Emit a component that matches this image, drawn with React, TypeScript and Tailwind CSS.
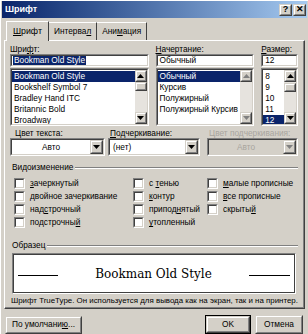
import React from "react";

function Sunken({ className = "", inner = "bg-white", children }: { className?: string; inner?: string; children?: React.ReactNode }) {
  return (
    <div className={`border border-t-[#808080] border-l-[#808080] border-b-white border-r-white ${className}`}>
      <div className={`w-full h-full border border-t-[#404040] border-l-[#404040] border-b-[#d4d0c8] border-r-[#d4d0c8] flex ${inner}`}>
        {children}
      </div>
    </div>
  );
}

function Raised({ className = "", children }: { className?: string; children?: React.ReactNode }) {
  return (
    <div className={`border border-t-[#d4d0c8] border-l-[#d4d0c8] border-r-[#404040] border-b-[#404040] bg-[#d4d0c8] ${className}`}>
      <div className="w-full h-full border border-t-white border-l-white border-r-[#808080] border-b-[#808080] flex items-center justify-center">
        {children}
      </div>
    </div>
  );
}

function Arrow({ up = false, grey = false }: { up?: boolean; grey?: boolean }) {
  const fill = grey ? "#808080" : "#000";
  return (
    <svg width="7" height="4" viewBox="0 0 7 4" className="block">
      {up ? <polygon points="0,4 7,4 3.5,0" fill={fill} /> : <polygon points="0,0 7,0 3.5,4" fill={fill} />}
    </svg>
  );
}

function ScrollBar({ thumb, disabled = false }: { thumb?: number; disabled?: boolean }) {
  return (
    <div className="w-[12px] h-full flex flex-col bg-[#e6e3de] shrink-0">
      <Raised className="w-[12px] h-[12px] shrink-0">
        <Arrow up grey={disabled} />
      </Raised>
      <div className="flex-1 flex flex-col">
        {thumb !== undefined && <div style={{ height: thumb }} />}
        {thumb !== undefined && <Raised className="w-[12px] h-[9px]" />}
      </div>
      <Raised className="w-[12px] h-[12px] shrink-0">
        <Arrow grey={disabled} />
      </Raised>
    </div>
  );
}

function U({ children }: { children: React.ReactNode }) {
  return <span className="underline underline-offset-1">{children}</span>;
}

function Item({ text, selected = false }: { text: string; selected?: boolean }) {
  return (
    <div className={`h-[11px] leading-[11px] px-[2px] whitespace-nowrap ${selected ? "bg-[#0a246a] text-white" : "text-black"}`}>
      {text}
    </div>
  );
}

function Combo({ text, center = false, disabled = false, className = "" }: { text: string; center?: boolean; disabled?: boolean; className?: string }) {
  return (
    <Sunken className={`h-[18px] ${className}`} inner={disabled ? "bg-[#d4d0c8]" : "bg-white"}>
      <div className={`flex-1 flex items-center px-[3px] ${center ? "justify-center" : ""} ${disabled ? "text-[#a8a59e]" : "text-black"}`}>
        {text}
      </div>
      <Raised className="w-[13px] h-full shrink-0">
        <Arrow grey={disabled} />
      </Raised>
    </Sunken>
  );
}

function Check({ children }: { children: React.ReactNode }) {
  return (
    <div className="h-[13px] flex items-center gap-[5px] whitespace-nowrap">
      <Sunken className="w-[11px] h-[11px] shrink-0" />
      <span>{children}</span>
    </div>
  );
}

function Separator({ label }: { label: string }) {
  return (
    <div className="flex items-center gap-[2px] h-[11px]">
      <span className="whitespace-nowrap">{label}</span>
      <div className="flex-1 flex flex-col">
        <div className="h-px bg-[#808080]" />
        <div className="h-px bg-white" />
      </div>
    </div>
  );
}

export default function App() {
  return (
    <div className="w-[308px] h-[334px] bg-[#d4d0c8] overflow-hidden font-['Liberation_Sans',Arial,sans-serif] text-[8.3px] text-black border-l border-t border-l-white border-t-white flex flex-col">
      {/* title bar */}
      <div className="h-[17px] mx-[1px] bg-gradient-to-r from-[#0a246a] to-[#a6caf0] flex items-center pl-[3px] pr-[1px]">
        <span className="text-white font-bold text-[9px] flex-1">Шрифт</span>
        <Raised className="w-[13px] h-[12px]">
          <span className="font-bold text-[9px] leading-none">?</span>
        </Raised>
        <Raised className="w-[13px] h-[12px] ml-[1px]">
          <span className="font-bold text-[9px] leading-none">✕</span>
        </Raised>
      </div>

      {/* tabs */}
      <div className="flex items-end h-[22px] pl-[5px]">
        <div className="h-[20px] px-[6px] flex items-center border-t border-l border-r border-t-white border-l-white border-r-[#404040] bg-[#d4d0c8] relative z-10 -mb-px">
          <span className="text-[8.8px]"><U>Ш</U>рифт</span>
        </div>
        <div className="h-[18px] px-[5px] flex items-center border-t border-r border-t-white border-r-[#404040]">
          Интерва<U>л</U>
        </div>
        <div className="h-[18px] px-[5px] flex items-center border-t border-r border-t-white border-r-[#404040]">
          Ани<U>м</U>ация
        </div>
      </div>

      {/* panel */}
      <div className="mx-[3px] h-[269px] border border-t-white border-l-white border-r-[#404040] border-b-[#404040]">
        <div className="w-full h-full border-r border-b border-r-[#808080] border-b-[#808080] px-[5px] pt-[2px] flex flex-col">
          {/* font / style / size */}
          <div className="flex gap-[7px]">
            <div className="w-[139px] flex flex-col">
              <div className="h-[11px]">Шри<U>ф</U>т:</div>
              <Sunken className="h-[13px]">
                <div className="flex items-center pl-[1px]">
                  <span className="bg-[#0a246a] text-white leading-[9px] px-[1px]">Bookman Old Style</span>
                </div>
              </Sunken>
              <Sunken className="h-[58px] mt-[1px]">
                <div className="flex-1 pt-[1px] overflow-hidden">
                  <Item text="Bookman Old Style" selected />
                  <Item text="Bookshelf Symbol 7" />
                  <Item text="Bradley Hand ITC" />
                  <Item text="Britannic Bold" />
                  <Item text="Broadway" />
                </div>
                <ScrollBar thumb={0} />
              </Sunken>
            </div>
            <div className="w-[99px] flex flex-col">
              <div className="h-[11px]"><U>Н</U>ачертание:</div>
              <Sunken className="h-[13px]">
                <div className="flex items-center pl-[2px]">Обычный</div>
              </Sunken>
              <Sunken className="h-[58px] mt-[1px]">
                <div className="flex-1 pt-[1px] overflow-hidden">
                  <Item text="Обычный" selected />
                  <Item text="Курсив" />
                  <Item text="Полужирный" />
                  <Item text="Полужирный Курсив" />
                </div>
                <ScrollBar disabled />
              </Sunken>
            </div>
            <div className="w-[37px] flex flex-col">
              <div className="h-[11px]"><U>Р</U>азмер:</div>
              <Sunken className="h-[13px]">
                <div className="flex items-center pl-[2px]">12</div>
              </Sunken>
              <Sunken className="h-[58px] mt-[1px]">
                <div className="flex-1 pt-[1px] overflow-hidden">
                  <Item text="8" />
                  <Item text="9" />
                  <Item text="10" />
                  <Item text="11" />
                  <Item text="12" selected />
                </div>
                <ScrollBar thumb={1} />
              </Sunken>
            </div>
          </div>

          {/* colors / underline */}
          <div className="flex mt-[1px]">
            <div className="w-[95px] flex flex-col">
              <div className="h-[11px] pl-[5px]">Цвет текста:</div>
              <Combo text="Авто" center />
            </div>
            <div className="w-[92px] ml-[3px] flex flex-col">
              <div className="h-[11px] pl-[2px]"><U>П</U>одчеркивание:</div>
              <Combo text="(нет)" />
            </div>
            <div className="w-[91px] ml-[7px] flex flex-col">
              <div className="h-[11px] pl-[2px] text-[#a8a59e]">Цвет подчеркивания:</div>
              <Combo text="Авто" center disabled />
            </div>
          </div>

          {/* effects */}
          <div className="mt-[6px] pl-[2px]">
            <Separator label="Видоизменение" />
          </div>
          <div className="flex mt-[4px] pl-[4px]">
            <div className="w-[119px] flex flex-col">
              <Check><U>з</U>ачеркнутый</Check>
              <Check>двойное зачеркивание</Check>
              <Check>над<U>с</U>трочный</Check>
              <Check>подстрочны<U>й</U></Check>
            </div>
            <div className="w-[74px] flex flex-col">
              <Check>с <U>т</U>енью</Check>
              <Check><U>к</U>онтур</Check>
              <Check>припод<U>н</U>ятый</Check>
              <Check><U>у</U>топленный</Check>
            </div>
            <div className="flex flex-col">
              <Check><U>м</U>алые прописные</Check>
              <Check><U>в</U>се прописные</Check>
              <Check>скрыты<U>й</U></Check>
            </div>
          </div>

          {/* sample */}
          <div className="mt-[11px] pl-[2px]">
            <Separator label="Образец" />
          </div>
          <div className="mt-[2px] mx-[2px] h-[48px] border border-t-[#808080] border-l-[#808080] border-b-white border-r-white">
            <div className="w-full h-full border border-t-[#404040] border-l-[#404040] border-b-[#404040] border-r-[#404040] bg-white flex items-center px-[4px]">
              <div className="w-[40px] h-px bg-black mt-[4px]" />
              <div className="flex-1 text-center font-['DejaVu_Serif','Liberation_Serif',serif] text-[12px]">
                Bookman Old Style
              </div>
              <div className="w-[41px] h-px bg-black mt-[4px]" />
            </div>
          </div>
          <div className="mt-[1px] pl-[1px] text-[7.9px] whitespace-nowrap">
            Шрифт TrueType. Он используется для вывода как на экран, так и на принтер.
          </div>
        </div>
      </div>

      {/* buttons */}
      <div className="flex items-center mt-[6px] pl-[4px] pr-[5px]">
        <Raised className="w-[77px] h-[18px]">
          По умолчани<U>ю</U>...
        </Raised>
        <div className="flex-1" />
        <div className="border border-black">
          <Raised className="w-[44px] h-[17px]">OK</Raised>
        </div>
        <Raised className="w-[48px] h-[19px] ml-[4px]">Отмена</Raised>
      </div>
    </div>
  );
}
